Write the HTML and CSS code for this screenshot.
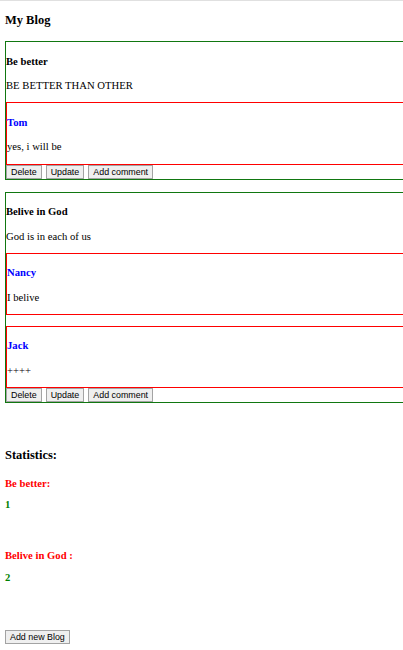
FILE: index.html
```html
<!DOCTYPE html>
<html lang="en">
<head>
<meta charset="utf-8">
<title>My Blog</title>
<link rel="stylesheet" href="styles.css">
</head>
<body>
<h3 class="page-title">My Blog</h3>

<div class="blog">
  <h4 class="blog-title">Be better</h4>
  <p class="blog-body">BE BETTER THAN OTHER</p>
  <div class="comment">
    <h4 class="comment-author">Tom</h4>
    <p class="comment-text">yes, i will be</p>
  </div>
  <div class="actions">
    <button class="btn">Delete</button>
    <button class="btn">Update</button>
    <button class="btn">Add comment</button>
  </div>
</div>

<div class="blog">
  <h4 class="blog-title">Belive in God</h4>
  <p class="blog-body">God is in each of us</p>
  <div class="comment">
    <h4 class="comment-author">Nancy</h4>
    <p class="comment-text">I belive</p>
  </div>
  <div class="comment">
    <h4 class="comment-author">Jack</h4>
    <p class="comment-text">++++</p>
  </div>
  <div class="actions">
    <button class="btn">Delete</button>
    <button class="btn">Update</button>
    <button class="btn">Add comment</button>
  </div>
</div>

<h3 class="stats-title">Statistics:</h3>
<div class="stat">
  <h4 class="stat-label">Be better:</h4>
  <h4 class="stat-value">1</h4>
</div>
<div class="stat">
  <h4 class="stat-label">Belive in God :</h4>
  <h4 class="stat-value">2</h4>
</div>

<button class="btn add-blog">Add new Blog</button>
</body>
</html>
```

FILE: styles.css
```css
html {
  border-top: 1px solid #e0e0e0;
  background: #ffffff;
}

body {
  margin: 0;
  padding: 0 0 0 5px;
  font-family: "Liberation Serif", "Times New Roman", serif;
  font-size: 10.67px;
  line-height: 12px;
  color: #000000;
}

.page-title {
  margin: 12px 0 14px;
  font-size: 12.48px;
  line-height: 14px;
  font-weight: bold;
}

.blog {
  border: 1px solid #117711;
  border-right: none;
  margin: 0 0 12px;
}

.blog-title,
.comment-author {
  margin: 12.7px 0;
  font-size: 10.67px;
  line-height: 12px;
  font-weight: bold;
}

.comment-author {
  color: #0000ff;
}

.blog-body,
.comment-text {
  margin: 10.67px 0;
}

.comment {
  border: 1px solid #ff0000;
  border-right: none;
  margin-top: 10.67px;
}

.comment-text {
  height: 12px;
  padding-bottom: 0.5px;
}

.actions {
  display: flex;
  gap: 4px;
}

.btn {
  font-family: "Liberation Sans", Arial, sans-serif;
  font-size: 8.9px;
  line-height: 10px;
  height: 14px;
  padding: 1px 4px;
  margin: 0;
  border: 1px solid #a3a3a3;
  background: #efefef;
  color: #000000;
  border-radius: 0;
}

.stats-title {
  margin: 45px 0 0;
  font-size: 12.48px;
  line-height: 14px;
  font-weight: bold;
}

.stat {
  margin: 0;
}

.stat + .stat {
  margin-top: 39px;
}

.stat-label {
  margin: 14.5px 0 0;
  font-size: 10.67px;
  line-height: 12px;
  color: #ff0000;
}

.stat-value {
  margin: 9.5px 0 0;
  font-size: 10.67px;
  line-height: 12px;
  color: #008000;
}

.add-blog {
  display: block;
  margin-top: 47px;
}
```
